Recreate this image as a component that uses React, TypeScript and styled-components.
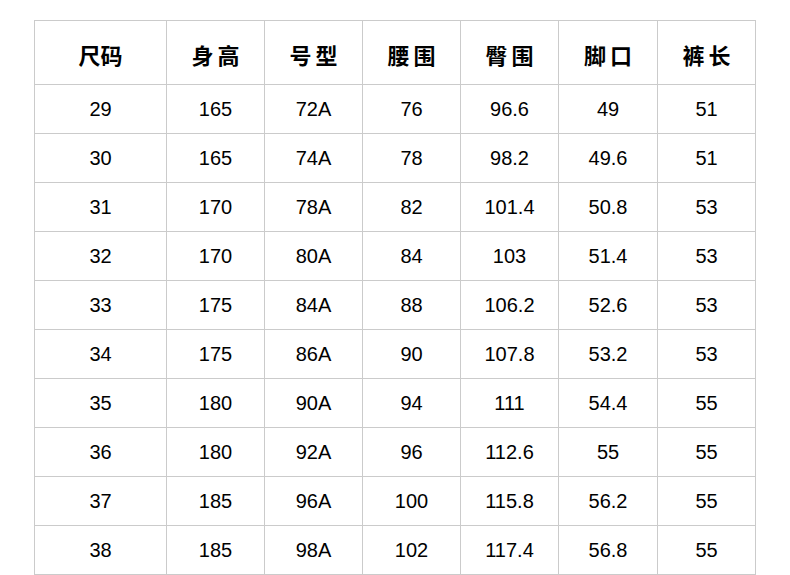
import React from "react";
import styled, { createGlobalStyle } from "styled-components";

const Global = createGlobalStyle`
  html, body { margin: 0; padding: 0; background: #fff; }
  body { font-family: "Liberation Sans", Arial, sans-serif; }
`;

const Page = styled.div`
  padding: 20px 0 0 34px;
`;

const Grid = styled.div`
  display: inline-grid;
  grid-template-columns: 131px 97px 97px 97px 97px 98px 97px;
  grid-template-rows: 63px repeat(10, 48px);
  gap: 1px;
  padding: 1px;
  background: #cbcbcb;
`;

const HeadCell = styled.div<{ $spaced?: boolean }>`
  background: #fff;
  display: flex;
  align-items: center;
  justify-content: center;
  font-family: "Noto Sans CJK SC", "Noto Sans", sans-serif;
  font-weight: 700;
  font-size: 22px;
  color: #000;
  letter-spacing: ${(p) => (p.$spaced ? "4px" : "0")};
  padding-left: ${(p) => (p.$spaced ? "4px" : "0")};
  padding-top: 2px;
`;

const Cell = styled.div`
  background: #fff;
  display: flex;
  align-items: center;
  justify-content: center;
  font-family: "Liberation Sans", Arial, sans-serif;
  font-size: 20px;
  color: #000;
  padding-top: 1px;
`;

const headers: [string, boolean][] = [
  ["尺码", false],
  ["身高", true],
  ["号型", true],
  ["腰围", true],
  ["臀围", true],
  ["脚口", true],
  ["裤长", true],
];

const rows: string[][] = [
  ["29", "165", "72A", "76", "96.6", "49", "51"],
  ["30", "165", "74A", "78", "98.2", "49.6", "51"],
  ["31", "170", "78A", "82", "101.4", "50.8", "53"],
  ["32", "170", "80A", "84", "103", "51.4", "53"],
  ["33", "175", "84A", "88", "106.2", "52.6", "53"],
  ["34", "175", "86A", "90", "107.8", "53.2", "53"],
  ["35", "180", "90A", "94", "111", "54.4", "55"],
  ["36", "180", "92A", "96", "112.6", "55", "55"],
  ["37", "185", "96A", "100", "115.8", "56.2", "55"],
  ["38", "185", "98A", "102", "117.4", "56.8", "55"],
];

export default function App() {
  return (
    <Page>
      <Global />
      <Grid>
        {headers.map(([h, s]) => (
          <HeadCell key={h} $spaced={s}>
            {h}
          </HeadCell>
        ))}
        {rows.map((r, i) =>
          r.map((v, j) => <Cell key={`${i}-${j}`}>{v}</Cell>)
        )}
      </Grid>
    </Page>
  );
}
